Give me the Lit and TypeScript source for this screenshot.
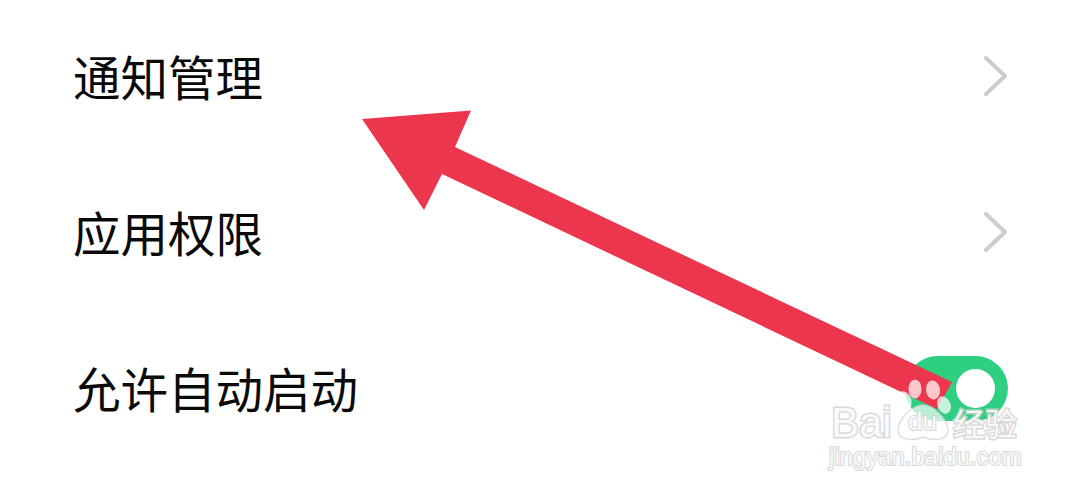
import { LitElement, html, css } from "lit";
import { customElement } from "lit/decorators.js";

@customElement("app-root")
class AppRoot extends LitElement {
  static styles = css`
    :host {
      display: block;
      width: 1080px;
      height: 494px;
      background: #fff;
      position: relative;
      overflow: hidden;
      font-family: "Noto Sans CJK SC", "Noto Sans", sans-serif;
    }
    .list {
      display: flex;
      flex-direction: column;
      padding: 0 72px 0 73px;
      margin-top: -2px;
    }
    .row {
      height: 156px;
      display: flex;
      align-items: center;
      justify-content: space-between;
    }
    .label {
      font-size: 47.5px;
      line-height: 60px;
      color: #0a0a0a;
    }
    .chev {
      width: 26px;
      height: 42px;
      display: block;
      margin-right: -1px;
    }
    .switch {
      width: 103px;
      height: 65px;
      border-radius: 33px;
      background: #2ecf80;
      display: flex;
      align-items: center;
      justify-content: flex-end;
      padding-right: 13px;
      box-sizing: border-box;
    }
    .knob {
      width: 39px;
      height: 39px;
      border-radius: 50%;
      background: #fff;
    }
    .overlay {
      position: absolute;
      left: 0;
      top: 0;
      width: 1080px;
      height: 494px;
    }
    .wm {
      position: absolute;
      color: rgba(255, 255, 255, 0.85);
      -webkit-text-stroke: 3px rgba(208, 208, 208, 0.8);
      paint-order: stroke fill;
      font-family: "Liberation Sans", sans-serif;
      white-space: nowrap;
    }
    .bai { left: 831px; top: 396px; font-size: 42px; line-height: 54px; }
    .du { left: 908px; top: 401px; font-size: 26px; line-height: 40px; -webkit-text-stroke-width: 2.2px; }
    .jy {
      left: 953px; top: 402px; font-size: 32px; line-height: 40px;
      font-family: "Noto Sans CJK SC", sans-serif;
    }
    .url { left: 829px; top: 442px; font-size: 23.5px; line-height: 30px; letter-spacing: 0.2px; -webkit-text-stroke-width: 2.2px; }
  `;

  private chevron() {
    return html`<svg class="chev" viewBox="0 0 26 42" aria-hidden="true">
      <path d="M3 3 L22 21 L3 39" fill="none" stroke="#cccccc" stroke-width="4" stroke-linecap="round" stroke-linejoin="round"></path>
    </svg>`;
  }

  render() {
    return html`
      <div class="list">
        <div class="row"><span class="label">通知管理</span>${this.chevron()}</div>
        <div class="row"><span class="label">应用权限</span>${this.chevron()}</div>
        <div class="row"><span class="label">允许自动启动</span><div class="switch"><div class="knob"></div></div></div>
      </div>
      <svg class="overlay" viewBox="0 0 1080 494" aria-hidden="true">
        <polygon fill="#ec364e" points="362,119 471,110.5 455,147 952,382 937,409 442,174 424,210"></polygon>
        <g fill="#fff" fill-opacity="0.72">
          <ellipse cx="915" cy="389" rx="6.5" ry="9.5"></ellipse>
          <ellipse cx="933" cy="390" rx="7" ry="9.5" transform="rotate(-8 933 390)"></ellipse>
          <ellipse cx="944" cy="405" rx="6.5" ry="9" transform="rotate(-25 944 405)"></ellipse>
          <ellipse cx="904" cy="401" rx="7.5" ry="10" transform="rotate(-20 904 401)"></ellipse>
          <path d="M923 405 C934 405 948 420 948 430 C948 441 932 441 923 437 C914 441 898 441 898 430 C898 420 912 405 923 405 Z"
            fill-opacity="0.68" stroke="#d2d2d2" stroke-opacity="0.7" stroke-width="1.5"></path>
        </g>
      </svg>
      <span class="wm bai">Bai</span>
      <span class="wm du">du</span>
      <span class="wm jy">经验</span>
      <span class="wm url">jingyan.baidu.com</span>
    `;
  }
}
